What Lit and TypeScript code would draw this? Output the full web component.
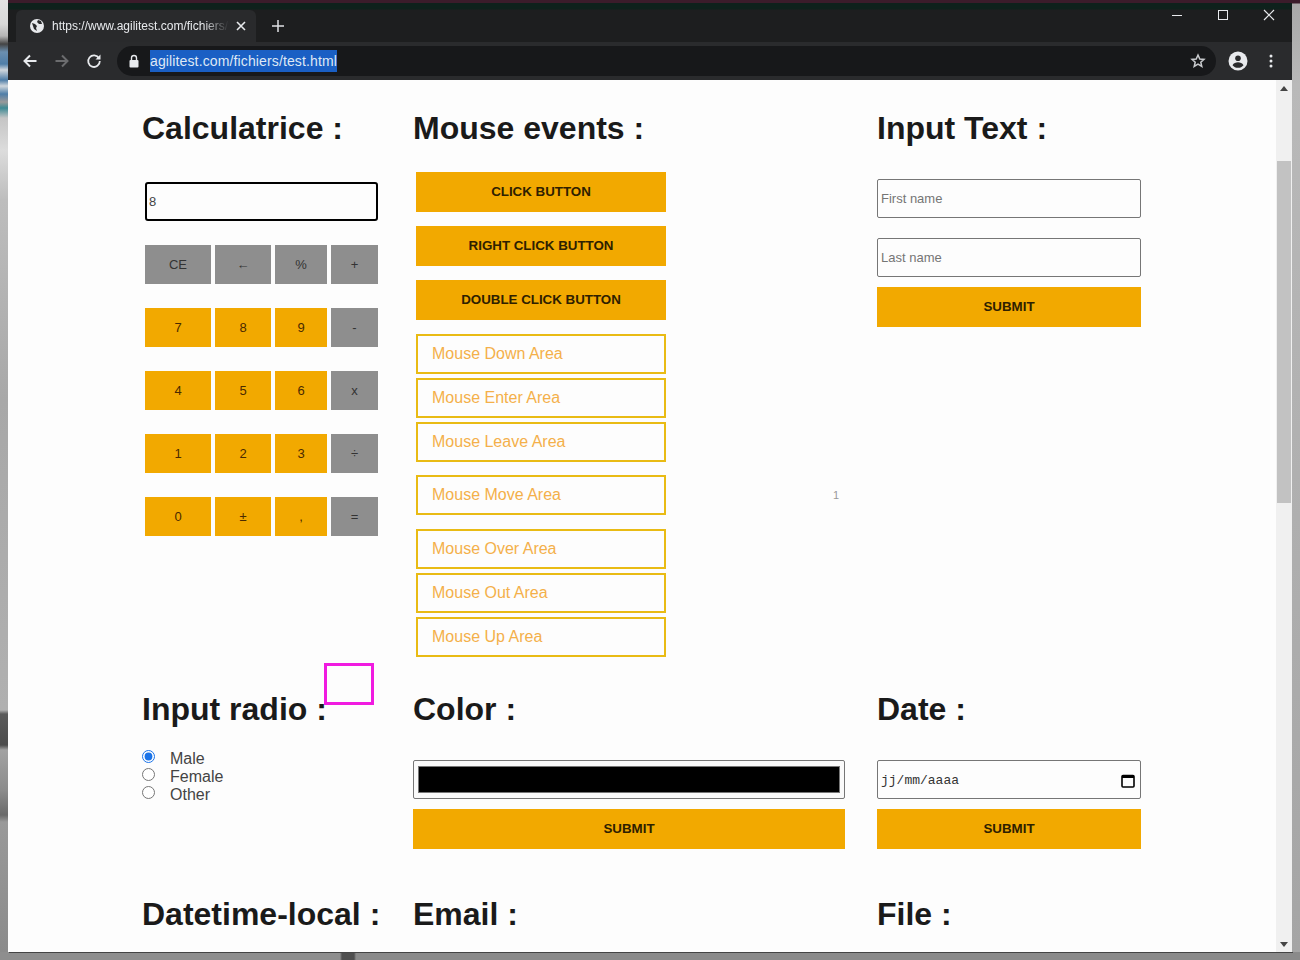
import { html, css, LitElement } from "lit";
import { customElement } from "lit/decorators.js";

const calcRows: [string, string][][] = [
  [["CE", "g"], ["←", "g"], ["%", "g"], ["+", "g"]],
  [["7", "o"], ["8", "o"], ["9", "o"], ["-", "g"]],
  [["4", "o"], ["5", "o"], ["6", "o"], ["x", "g"]],
  [["1", "o"], ["2", "o"], ["3", "o"], ["÷", "g"]],
  [["0", "o"], ["±", "o"], [",", "o"], ["=", "g"]],
];

@customElement("app-root")
export class AppRoot extends LitElement {
  static styles = css`
    :host {
      display: block;
      position: relative;
      width: 1300px;
      height: 960px;
      overflow: hidden;
      font-family: "Liberation Sans", Arial, sans-serif;
      background: #8d8d8d;
    }

    .desktop {
      display: flex;
      height: 952px;
    }

    .edge-left {
      width: 8px;
      flex: none;
      background: linear-gradient(
        to bottom,
        #e2e2e2 0,
        #d8d8d8 24px,
        #b5b5b5 36px,
        #444 44px,
        #6b8fb0 52px,
        #4f7ea8 64px,
        #cfd6dc 70px,
        #4f7ea8 80px,
        #cfd6dc 86px,
        #4f7ea8 94px,
        #9a9a9a 102px,
        #3f8a94 108px,
        #c5c5c5 118px,
        #dcdcdc 150px,
        #bdbdbd 200px,
        #a8a8a8 400px,
        #b0b0b0 710px,
        #5a5a5a 714px,
        #4c4c4c 745px,
        #a2a2a2 750px,
        #8c8c8c 790px,
        #6a6a6a 815px,
        #999 822px,
        #8b8b8b 952px
      );
    }

    .edge-right {
      width: 8px;
      flex: none;
      background: linear-gradient(to bottom, #3b1c2b 0, #3b1c2b 3px, #a8a8a8 4px, #b9b9b9 84px, #a5a5a5 952px);
    }

    .edge-bottom {
      height: 8px;
      background: linear-gradient(
        to right,
        #8e8e8e 0,
        #8e8e8e 340px,
        #4f4f4f 342px,
        #4f4f4f 354px,
        #8a8a8a 356px,
        #8a8a8a 1300px
      );
    }

    .window {
      flex: 1;
      display: flex;
      flex-direction: column;
      min-width: 0;
      box-shadow: 1px 1px 0 #444;
    }

    .titlebar {
      height: 42px;
      flex: none;
      display: flex;
      flex-direction: column;
      background: #1d1e1f;
    }

    .maroon {
      height: 3px;
      background: #3b1c2b;
    }

    .tabstrip {
      flex: 1;
      display: flex;
      align-items: flex-end;
      padding-left: 8px;
      background: linear-gradient(to bottom, #0e211c 0, #0e211c 6px, #1d1e1f 7px);
      position: relative;
    }

    .tab {
      width: 240px;
      height: 32px;
      box-sizing: border-box;
      display: flex;
      align-items: center;
      padding: 0 10px 0 13px;
      gap: 7px;
      background: #292a2c;
      border-radius: 6px 6px 0 0;
      color: #e8eaed;
      font-size: 12px;
    }

    .tab-title {
      flex: 1;
      white-space: nowrap;
      overflow: hidden;
      -webkit-mask-image: linear-gradient(to right, #000 85%, transparent);
      mask-image: linear-gradient(to right, #000 85%, transparent);
    }

    .newtab {
      margin: 0 0 8px 14px;
      width: 16px;
      height: 16px;
    }

    .winctl {
      margin-left: auto;
      align-self: flex-start;
      display: flex;
      align-items: center;
      gap: 33px;
      padding: 5px 16px 0 0;
    }

    .toolbar {
      height: 38px;
      flex: none;
      box-sizing: border-box;
      display: flex;
      align-items: center;
      background: #2a2b2d;
      padding: 0 19px 0 14px;
    }

    .navicon {
      width: 16px;
      height: 16px;
      margin-right: 16px;
      flex: none;
    }

    .omnibox {
      flex: 1;
      height: 30px;
      margin: 0 12px 0 -1px;
      box-sizing: border-box;
      display: flex;
      align-items: center;
      padding: 0 10px 0 11px;
      background: #17181a;
      border-radius: 15px;
    }

    .url {
      margin-left: 10px;
      padding: 2px 0;
      background: #1a5fc4;
      color: #dfe8f5;
      font-size: 14px;
      letter-spacing: 0.13px;
      line-height: 18px;
    }

    .omni-star {
      margin-left: auto;
    }

    .avatar {
      width: 20px;
      height: 20px;
      flex: none;
      margin-right: 21px;
    }

    .dots {
      flex: none;
    }

    .viewport {
      flex: 1;
      display: flex;
      min-height: 0;
      background: #fdfdfd;
    }

    .page {
      flex: 1;
      min-width: 0;
      overflow: hidden;
      box-sizing: border-box;
      padding: 26px 0 0 134px;
    }

    .scrollbar {
      width: 16px;
      flex: none;
      display: flex;
      flex-direction: column;
      align-items: center;
      background: #f0f0f0;
    }

    .arrow {
      width: 16px;
      height: 16px;
      flex: none;
      display: flex;
      align-items: center;
      justify-content: center;
    }

    .track {
      flex: 1;
      width: 100%;
      padding-top: 65px;
      box-sizing: border-box;
    }

    .thumb {
      width: 14px;
      margin: 0 1px;
      height: 342px;
      background: #c2c2c2;
    }

    .grid {
      display: grid;
      grid-template-columns: 239px 432px 264px;
      column-gap: 32px;
    }

    h2 {
      margin: 0;
      font-size: 32px;
      line-height: 44px;
      font-weight: 700;
      color: #1a1a1a;
      white-space: nowrap;
    }

    .row-1 {
      height: 581px;
    }

    .row-2 {
      height: 205px;
    }

    .calc {
      margin: 32px 0 0 3px;
      width: 233px;
    }

    .calc-screen {
      display: block;
      box-sizing: border-box;
      width: 233px;
      height: 39px;
      border: 2px solid #000;
      border-radius: 3px;
      padding: 0 2px;
      background: #fdfdfd;
      font-family: "Liberation Sans", Arial, sans-serif;
      font-size: 13px;
      color: #444;
      outline: none;
    }

    .keys {
      margin-top: 24px;
      display: grid;
      grid-template-columns: 66px 56px 52px 47px;
      grid-auto-rows: 39px;
      gap: 24px 4px;
    }

    .key {
      display: flex;
      align-items: center;
      justify-content: center;
      font-size: 13px;
      color: #333;
    }

    .key.g {
      background: #8e8e8e;
    }

    .key.o {
      background: #f2a900;
      color: #4a2a00;
    }

    .mouse {
      margin: 22px 0 0 3px;
      position: relative;
    }

    .mbtn {
      display: flex;
      align-items: center;
      justify-content: center;
      width: 250px;
      height: 40px;
      margin-bottom: 14px;
      padding-bottom: 2px;
      box-sizing: border-box;
      background: #f2a900;
      font-size: 13.33px;
      font-weight: 700;
      color: #2e2000;
    }

    .area {
      display: flex;
      align-items: center;
      box-sizing: border-box;
      width: 250px;
      height: 40px;
      margin-bottom: 4px;
      padding-left: 14px;
      border: 2px solid #e9bb14;
      color: #f4b04a;
      font-size: 16px;
    }

    .area.spaced {
      margin-top: 9px;
      margin-bottom: 14px;
    }

    .move-row {
      display: flex;
      align-items: center;
      justify-content: space-between;
      width: 423px;
    }

    .counter {
      font-size: 11px;
      color: #999;
      margin-top: -5px;
    }

    .texts {
      margin-top: 29px;
      width: 264px;
    }

    .field {
      display: block;
      box-sizing: border-box;
      width: 264px;
      height: 39px;
      border: 1px solid #767676;
      border-radius: 2px;
      padding: 0 3px;
      background: #fdfdfd;
      font-family: "Liberation Sans", Arial, sans-serif;
      font-size: 13px;
      outline: none;
    }

    .field::placeholder {
      color: #757575;
    }

    .field + .field {
      margin-top: 20px;
    }

    .submit {
      display: flex;
      align-items: center;
      justify-content: center;
      height: 40px;
      margin-top: 10px;
      padding-bottom: 2px;
      box-sizing: border-box;
      background: #f2a900;
      font-size: 13.33px;
      font-weight: 700;
      color: #2e2000;
    }

    .radios {
      margin-top: 19px;
      font-size: 16px;
      line-height: 18px;
      color: #444;
    }

    .radio {
      display: flex;
      align-items: center;
      height: 18px;
      gap: 15px;
    }

    .radio input {
      margin: -5px 0 0 0;
      width: 13px;
      height: 13px;
      accent-color: #1a73e8;
    }

    .colorblock,
    .dateblock {
      margin-top: 29px;
    }

    .colorbox {
      box-sizing: border-box;
      height: 39px;
      padding: 5px 4px 5px 4px;
      border: 1px solid #767676;
      border-radius: 2px;
      background: #fafafa;
    }

    .swatch {
      height: 100%;
      background: #000;
      border: 1px solid #777;
      box-sizing: border-box;
    }

    .datebox {
      box-sizing: border-box;
      height: 39px;
      display: flex;
      align-items: center;
      justify-content: space-between;
      padding: 2px 4px 0 3px;
      border: 1px solid #767676;
      border-radius: 2px;
      font-family: "Liberation Mono", monospace;
      font-size: 13px;
      color: #333;
    }

    .marker {
      position: absolute;
      left: 324px;
      top: 663px;
      width: 50px;
      height: 42px;
      box-sizing: border-box;
      border: 3px solid #f01be0;
      pointer-events: none;
    }
  `;

  private renderChrome() {
    return html`
      <div class="titlebar">
        <div class="maroon"></div>
        <div class="tabstrip">
          <div class="tab">
            <svg width="16" height="16" viewBox="0 0 16 16">
              <circle cx="8" cy="8" r="7" fill="#e8eaed" />
              <path d="M3 5l3 1 2 2-1 2 1 3-3-2-1-3zM9 2l3 1 1 3-3 0-2-2z" fill="#292a2c" />
            </svg>
            <span class="tab-title">https://www.agilitest.com/fichiers/test.html</span>
            <svg width="10" height="10" viewBox="0 0 10 10">
              <path d="M1 1l8 8M9 1l-8 8" stroke="#e8eaed" stroke-width="1.6" />
            </svg>
          </div>
          <svg class="newtab" viewBox="0 0 16 16">
            <path d="M8 2v12M2 8h12" stroke="#dfe1e5" stroke-width="1.5" />
          </svg>
          <div class="winctl">
            <svg width="14" height="12" viewBox="0 0 14 12"><path d="M2 6.500h10" stroke="#e8eaed" /></svg>
            <svg width="12" height="12" viewBox="0 0 12 12">
              <rect x="1.500" y="1.500" width="9" height="9" fill="none" stroke="#e8eaed" />
            </svg>
            <svg width="14" height="14" viewBox="0 0 14 14">
              <path d="M2 2l10 10M12 2L2 12" stroke="#e8eaed" stroke-width="1.200" />
            </svg>
          </div>
        </div>
      </div>
      <div class="toolbar">
        <svg class="navicon" viewBox="0 0 16 16">
          <path d="M14.500 8H3M8 2.500L2.500 8 8 13.500" fill="none" stroke="#e8eaed" stroke-width="2" />
        </svg>
        <svg class="navicon" viewBox="0 0 16 16">
          <path d="M1.500 8H13M8 2.500L13.500 8 8 13.500" fill="none" stroke="#6b6c6e" stroke-width="2" />
        </svg>
        <svg class="navicon" viewBox="0 0 16 16">
          <path d="M13 5.200A5.800 5.800 0 1 0 13.800 8" fill="none" stroke="#e8eaed" stroke-width="1.800" />
          <path d="M14.500 1.500v5h-5z" fill="#e8eaed" />
        </svg>
        <div class="omnibox">
          <svg width="12" height="14" viewBox="0 0 12 14">
            <rect x="1.500" y="6" width="9" height="7.500" rx="1" fill="#e8eaed" />
            <path d="M3.500 6V4a2.500 2.500 0 0 1 5 0v2" fill="none" stroke="#e8eaed" stroke-width="1.400" />
          </svg>
          <span class="url">agilitest.com/fichiers/test.html</span>
          <svg class="omni-star" width="16" height="16" viewBox="0 0 16 16">
            <path
              d="M8 2l1.800 4 4.200.4-3.200 2.800 1 4.200L8 11.200 4.200 13.400l1-4.200L2 6.400 6.200 6z"
              fill="none"
              stroke="#c9cbce"
              stroke-width="1.500"
            />
          </svg>
        </div>
        <svg class="avatar" viewBox="0 0 20 20">
          <circle cx="10" cy="10" r="9.500" fill="#e8eaed" />
          <circle cx="10" cy="7.200" r="2.800" fill="#2a2b2d" />
          <path d="M4.500 14.200c1.200-2.200 3.300-3 5.500-3s4.300.8 5.500 3c-1.300 1.600-3.300 2.600-5.500 2.600s-4.200-1-5.500-2.600z" fill="#2a2b2d" />
        </svg>
        <svg class="dots" width="4" height="14" viewBox="0 0 4 14">
          <circle cx="2" cy="2" r="1.500" fill="#e8eaed" />
          <circle cx="2" cy="7" r="1.500" fill="#e8eaed" />
          <circle cx="2" cy="12" r="1.500" fill="#e8eaed" />
        </svg>
      </div>
    `;
  }

  private renderCalc() {
    return html`
      <div>
        <h2>Calculatrice :</h2>
        <div class="calc">
          <input class="calc-screen" value="8" />
          <div class="keys">
            ${calcRows.flat().map(([label, kind]) => html`<div class="key ${kind}">${label}</div>`)}
          </div>
        </div>
      </div>
    `;
  }

  private renderMouse() {
    return html`
      <div>
        <h2>Mouse events :</h2>
        <div class="mouse">
          <div class="mbtn">CLICK BUTTON</div>
          <div class="mbtn">RIGHT CLICK BUTTON</div>
          <div class="mbtn">DOUBLE CLICK BUTTON</div>
          <div class="area">Mouse Down Area</div>
          <div class="area">Mouse Enter Area</div>
          <div class="area">Mouse Leave Area</div>
          <div class="move-row">
            <div class="area spaced">Mouse Move Area</div>
            <span class="counter">1</span>
          </div>
          <div class="area">Mouse Over Area</div>
          <div class="area">Mouse Out Area</div>
          <div class="area">Mouse Up Area</div>
        </div>
      </div>
    `;
  }

  render() {
    return html`
      <div class="desktop">
        <div class="edge-left"></div>
        <div class="window">
          ${this.renderChrome()}
          <div class="viewport">
            <div class="page">
              <div class="grid row-1">
                ${this.renderCalc()} ${this.renderMouse()}
                <div>
                  <h2>Input Text :</h2>
                  <div class="texts">
                    <input class="field" placeholder="First name" />
                    <input class="field" placeholder="Last name" />
                    <div class="submit">SUBMIT</div>
                  </div>
                </div>
              </div>
              <div class="grid row-2">
                <div>
                  <h2>Input radio :</h2>
                  <div class="radios">
                    <label class="radio"><input type="radio" name="gender" checked />Male</label>
                    <label class="radio"><input type="radio" name="gender" />Female</label>
                    <label class="radio"><input type="radio" name="gender" />Other</label>
                  </div>
                </div>
                <div>
                  <h2>Color :</h2>
                  <div class="colorblock">
                    <div class="colorbox"><div class="swatch"></div></div>
                    <div class="submit">SUBMIT</div>
                  </div>
                </div>
                <div>
                  <h2>Date :</h2>
                  <div class="dateblock">
                    <div class="datebox">
                      <span>jj/mm/aaaa</span>
                      <svg width="16" height="16" viewBox="0 0 16 16">
                        <rect x="2" y="2.500" width="12" height="11.500" rx="1" fill="none" stroke="#000" stroke-width="1.600" />
                        <rect x="2" y="2" width="12" height="3" fill="#000" />
                      </svg>
                    </div>
                    <div class="submit">SUBMIT</div>
                  </div>
                </div>
              </div>
              <div class="grid">
                <h2>Datetime-local :</h2>
                <h2>Email :</h2>
                <h2>File :</h2>
              </div>
            </div>
            <div class="scrollbar">
              <div class="arrow">
                <svg width="8" height="5" viewBox="0 0 8 5"><path d="M4 0l4 5H0z" fill="#444" /></svg>
              </div>
              <div class="track"><div class="thumb"></div></div>
              <div class="arrow">
                <svg width="8" height="5" viewBox="0 0 8 5"><path d="M0 0h8L4 5z" fill="#444" /></svg>
              </div>
            </div>
          </div>
        </div>
        <div class="edge-right"></div>
      </div>
      <div class="edge-bottom"></div>
      <div class="marker"></div>
    `;
  }
}
